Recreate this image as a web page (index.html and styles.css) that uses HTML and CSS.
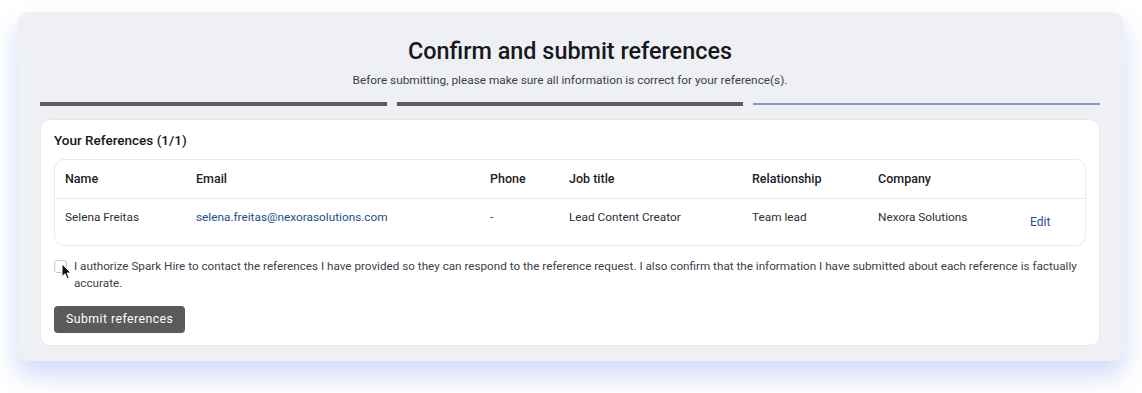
FILE: index.html
```html
<!DOCTYPE html>
<html lang="en">
<head>
<meta charset="utf-8">
<title>Confirm and submit references</title>
<link rel="stylesheet" href="styles.css">
</head>
<body>
<main class="panel">
  <header class="head">
    <h1 class="title">Confirm and submit references</h1>
    <p class="subtitle">Before submitting, please make sure all information is correct for your reference(s).</p>
  </header>
  <div class="steps">
    <span class="step done"></span>
    <span class="step done"></span>
    <span class="step todo"></span>
  </div>
  <section class="card">
    <h2 class="card-title">Your References (1/1)</h2>
    <div class="table-wrap">
      <table class="refs">
        <colgroup>
          <col class="c-name"><col class="c-email"><col class="c-phone"><col class="c-job"><col class="c-rel"><col class="c-comp"><col class="c-act">
        </colgroup>
        <thead>
          <tr>
            <th>Name</th><th>Email</th><th>Phone</th><th>Job title</th><th>Relationship</th><th>Company</th><th></th>
          </tr>
        </thead>
        <tbody>
          <tr>
            <td>Selena Freitas</td>
            <td><a class="link" href="#">selena.freitas@nexorasolutions.com</a></td>
            <td>-</td>
            <td>Lead Content Creator</td>
            <td>Team lead</td>
            <td>Nexora Solutions</td>
            <td class="act"><button class="edit" type="button">Edit</button></td>
          </tr>
        </tbody>
      </table>
    </div>
    <label class="consent">
      <span class="box-wrap">
        <input type="checkbox" class="box">
        <svg class="cursor" width="12" height="17" viewBox="0 0 12 17" aria-hidden="true"><path d="M1 1 L1 13.5 L4 10.8 L6.2 15.6 L8.2 14.7 L6 10 L10 10 Z" fill="#111" stroke="#fff" stroke-width="1" stroke-linejoin="round"/></svg>
      </span>
      <span class="consent-text">I authorize Spark Hire to contact the references I have provided so they can respond to the reference request. I also confirm that the information I have submitted about each reference is factually accurate.</span>
    </label>
    <button class="submit" type="button">Submit references</button>
  </section>
</main>
</body>
</html>
```
FILE: styles.css
```css
* { box-sizing: border-box; }
html { background: #ffffff; }
body {
  margin: 0;
  min-height: 393px;
  padding: 12px 18px 33px;
  background: #ffffff;
  font-family: Roboto, "Liberation Sans", sans-serif;
  color: #2b2f36;
}
.panel {
  background: #eef0f4;
  border-radius: 12px;
  padding: 25px 24px 15px 22px;
  box-shadow: 0 14px 26px rgba(70, 110, 230, 0.26);
}
.head { text-align: center; }
.title {
  margin: 0;
  font-size: 23.4px;
  line-height: 28px;
  font-weight: 500;
  color: #16181d;
}
.subtitle {
  margin: 7px 0 0;
  font-size: 11.8px;
  line-height: 16px;
  color: #3a3f4b;
}
.steps {
  display: flex;
  align-items: center;
  gap: 10px;
  margin-top: 13px;
  height: 6px;
}
.step { flex: 1; display: block; }
.step.done { height: 4px; background: #5b5b5b; }
.step.todo { height: 2px; background: #8c97c2; }
.card {
  margin-top: 12px;
  background: #ffffff;
  border: 1px solid #e6e8ed;
  border-radius: 10px;
  padding: 10px 13px 12px;
}
.card-title {
  margin: 0;
  font-size: 13.5px;
  line-height: 20px;
  font-weight: 500;
  color: #16181d;
}
.table-wrap {
  margin-top: 9px;
  border: 1px solid #e8eaef;
  border-radius: 10px;
  overflow: hidden;
}
.refs {
  width: 100%;
  border-collapse: collapse;
  table-layout: fixed;
  font-size: 11.8px;
}
.c-name { width: 131px; }
.c-email { width: 294px; }
.c-phone { width: 79px; }
.c-job { width: 183px; }
.c-rel { width: 126px; }
.c-comp { width: 144px; }
.refs th {
  text-align: left;
  font-size: 12.5px;
  font-weight: 500;
  color: #1e2127;
  padding: 9px 10px 9px;
  line-height: 20px;
  border-bottom: 1px solid #e8eaef;
}
.refs td {
  vertical-align: top;
  padding: 8px 10px 0;
  line-height: 20px;
  color: #2b2f36;
  height: 46px;
}
.refs td.act { vertical-align: middle; padding: 0 0 0 8px; }
.link { color: #1d4b8f; text-decoration: none; }
.edit {
  font: inherit;
  font-size: 12px;
  color: #1f4c9c;
  background: none;
  border: 0;
  padding: 6px 10px;
  line-height: 20px;
  cursor: pointer;
}
.consent {
  display: flex;
  align-items: flex-start;
  gap: 7px;
  margin-top: 12px;
  font-size: 11.7px;
  line-height: 17px;
  color: #3a3f4b;
}
.box-wrap { position: relative; flex: none; width: 13px; height: 13px; margin-top: 2px; }
.box {
  appearance: none;
  -webkit-appearance: none;
  margin: 0;
  width: 13px;
  height: 13px;
  border: 1px solid #c6c9d0;
  border-radius: 3px;
  background: #fff;
}
.cursor { position: absolute; left: 7px; top: 3px; }
.submit {
  margin-top: 14px;
  display: block;
  font-family: Roboto, "Liberation Sans", sans-serif;
  font-size: 12.3px;
  letter-spacing: 0.45px;
  line-height: 17px;
  color: #ffffff;
  background: #5a5a5a;
  border: 0;
  border-radius: 4px;
  padding: 5px 12px;
}
```
